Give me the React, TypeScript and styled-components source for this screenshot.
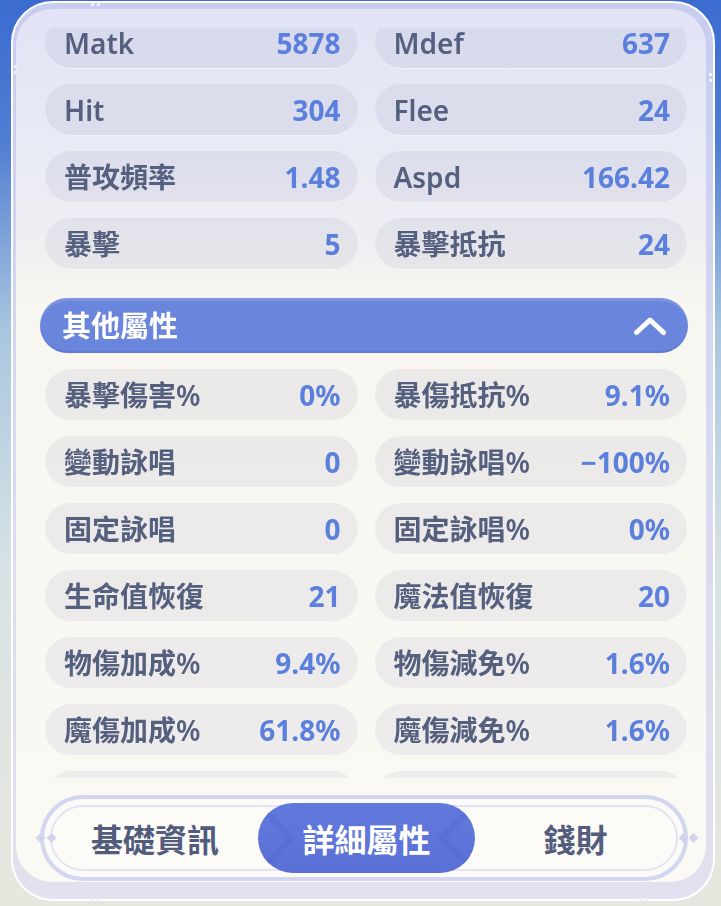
import React from 'react';
import styled, { createGlobalStyle } from 'styled-components';

// colours picked off the screenshot
const COLORS = {
  LABEL: '#55607f',
  VALUE: '#5a7fdc',
  HEADER: '#6a85dc',
  ACTIVE_TAB: '#5a70d6',
  FRAME: '#d3d6f1',
};

const GlobalStyle = createGlobalStyle`
  html, body {
    margin: 0;
    padding: 0;
  }
  body {
    width: 721px;
    height: 906px;
    overflow: hidden;
    background: linear-gradient(180deg, #3b6bcf 0px, #4f7ed2 140px, #a9c6df 330px, #d6e2e4 560px, #e8e7df 100%);
    font-family: "Noto Sans", "Noto Sans CJK TC", sans-serif;
  }
`;

const Panel = styled.div`
  position: relative;
  box-sizing: border-box;
  height: 900px;
  margin: 1px 6px 0 11px;
  border: 2px solid #ffffff;
  border-radius: 42px;
  padding: 6px 7px 17px 3px;
  background: linear-gradient(180deg, #c8cdf0 0%, #d6d9f2 45%, #e3e0ef 100%);
`;

const Content = styled.div`
  box-sizing: border-box;
  height: 100%;
  display: flex;
  flex-direction: column;
  padding: 5px 18px 0 24px;
  border-radius: 36px;
  background: linear-gradient(180deg, #e2e4f6 0px, #e8eaf5 140px, #f0f0f2 240px, #f8f6f0 300px, #fbf9f4 100%);
`;

// scrolled list: the top edge fades out the first row like the game's scroll view
const Scroll = styled.div`
  height: 764px;
  overflow: hidden;
  -webkit-mask-image: linear-gradient(180deg, transparent 13px, #000 14px);
  mask-image: linear-gradient(180deg, transparent 13px, #000 14px);
`;

const List = styled.div`
  padding-top: 3px;
`;

const StatGrid = styled.div`
  display: grid;
  grid-template-columns: 1fr 1fr;
  column-gap: 17px;
  row-gap: 15px;
  padding: 0 1px 0 5px;
`;

const StatPill = styled.div`
  height: 52px;
  display: flex;
  align-items: center;
  justify-content: space-between;
  padding: 0 17px 0 19px;
  border-radius: 26px;
  background: rgba(100, 106, 150, 0.085);
  box-shadow: inset 0 -1px 0 rgba(255, 255, 255, 0.6);
`;

const Label = styled.span`
  font-size: 28px;
  line-height: 1;
  font-weight: 600;
  color: ${COLORS.LABEL};
  white-space: nowrap;
`;

const Value = styled.span`
  font-size: 28px;
  line-height: 1;
  font-weight: 700;
  color: ${COLORS.VALUE};
  white-space: nowrap;
`;

const SectionHeader = styled.div`
  height: 55px;
  margin: 28px 0 16px;
  display: flex;
  align-items: center;
  justify-content: space-between;
  padding: 0 21px 0 22px;
  border-radius: 28px;
  background: ${COLORS.HEADER};
  box-shadow: inset 0 3px 0 rgba(255, 255, 255, 0.12), inset 0 -2px 0 rgba(70, 90, 190, 0.25);
`;

const HeaderTitle = styled.span`
  font-size: 29px;
  line-height: 1;
  font-weight: 700;
  color: #ffffff;
`;

const TabFrame = styled.div`
  position: relative;
  box-sizing: border-box;
  height: 86px;
  margin-top: 17px;
  padding: 6px;
  border: 4px solid ${COLORS.FRAME};
  border-radius: 43px;
  background: #fcfbf7;
`;

const TabTrack = styled.div`
  box-sizing: border-box;
  height: 100%;
  display: grid;
  grid-template-columns: 206px 217px 1fr;
  border: 2px solid #e3e3f3;
  border-radius: 999px;
`;

const Tab = styled.div<{ $active?: boolean }>`
  position: relative;
  display: flex;
  align-items: center;
  justify-content: center;
  margin: ${({ $active }) => ($active ? '-4px 0' : '0')};
  border-radius: 999px;
  overflow: hidden;
  font-family: "Noto Sans CJK TC", sans-serif;
  font-size: 32px;
  font-weight: 700;
  color: ${({ $active }) => ($active ? '#ffffff' : '#525c7c')};
  background: ${({ $active }) => ($active ? `linear-gradient(180deg, #6179dc 0%, ${COLORS.ACTIVE_TAB} 100%)` : 'transparent')};

  /* darker chevron ornaments at both ends of the active tab */
  &::before, &::after {
    content: '';
    display: ${({ $active }) => ($active ? 'block' : 'none')};
    position: absolute;
    top: 50%;
    width: 44px;
    height: 44px;
    border: 6px solid rgba(70, 95, 205, 0.22);
    transform: translateY(-50%) rotate(45deg);
  }
  &::before { left: -30px; }
  &::after { right: -30px; }
`;

const TabText = styled.span`
  position: relative;
  z-index: 1;
`;

const Diamond = styled.i<{ $side: 'left' | 'right'; $offset: number }>`
  position: absolute;
  top: 50%;
  ${({ $side, $offset }) => `${$side}: ${$offset}px;`}
  width: 7px;
  height: 7px;
  background: #d2d4ef;
  transform: translateY(-50%) rotate(45deg);
`;

const Dots = styled.i<{ $x: number; $y: number; $vertical?: boolean }>`
  position: absolute;
  left: ${({ $x }) => $x}px;
  top: ${({ $y }) => $y}px;
  width: ${({ $vertical }) => ($vertical ? '3px' : '10px')};
  height: ${({ $vertical }) => ($vertical ? '10px' : '3px')};
  background: ${({ $vertical }) =>
    $vertical
      ? 'repeating-linear-gradient(180deg, #eef0fb 0 3px, transparent 3px 6px)'
      : 'repeating-linear-gradient(90deg, #eef0fb 0 3px, transparent 3px 6px)'};
`;

type Stat = [string, string];

const BASE_STATS: Stat[][] = [
  [['Matk', '5878'], ['Mdef', '637']],
  [['Hit', '304'], ['Flee', '24']],
  [['普攻頻率', '1.48'], ['Aspd', '166.42']],
  [['暴擊', '5'], ['暴擊抵抗', '24']],
];

// last row only peeks in under the scroll edge, its text is not visible
const OTHER_STATS: Stat[][] = [
  [['暴擊傷害%', '0%'], ['暴傷抵抗%', '9.1%']],
  [['變動詠唱', '0'], ['變動詠唱%', '−100%']],
  [['固定詠唱', '0'], ['固定詠唱%', '0%']],
  [['生命值恢復', '21'], ['魔法值恢復', '20']],
  [['物傷加成%', '9.4%'], ['物傷減免%', '1.6%']],
  [['魔傷加成%', '61.8%'], ['魔傷減免%', '1.6%']],
  [['', ''], ['', '']],
];

const StatRows: React.FC<{ rows: Stat[][] }> = ({ rows }) => (
  <StatGrid>
    {rows.flat().map(([label, value], i) => (
      <StatPill key={i}>
        {label && <Label>{label}</Label>}
        {value && <Value>{value}</Value>}
      </StatPill>
    ))}
  </StatGrid>
);

const ChevronUp = () => (
  <svg width="34" height="20" viewBox="0 0 34 20">
    <path d="M3.5 16.5 L17 4 L30.5 16.5" fill="none" stroke="#ffffff" strokeWidth="5" strokeLinecap="round" strokeLinejoin="round" />
  </svg>
);

const TABS = ['基礎資訊', '詳細屬性', '錢財'];

export default function App() {
  return (
    <>
      <GlobalStyle />
      <Panel>
        <Dots $x={78} $y={0} />
        <Dots $x={1} $y={62} $vertical />
        <Dots $x={696} $y={70} $vertical />
        <Dots $x={78} $y={895} />
        <Dots $x={626} $y={895} />
        <Content>
          <Scroll>
            <List>
              <StatRows rows={BASE_STATS} />
              <SectionHeader>
                <HeaderTitle>其他屬性</HeaderTitle>
                <ChevronUp />
              </SectionHeader>
              <StatRows rows={OTHER_STATS} />
            </List>
          </Scroll>
          <TabFrame>
            <Diamond $side="left" $offset={-7} />
            <Diamond $side="left" $offset={4} />
            <Diamond $side="right" $offset={-3} />
            <Diamond $side="right" $offset={-13} />
            <TabTrack>
              {TABS.map((t, i) => (
                <Tab key={t} $active={i === 1}>
                  <TabText>{t}</TabText>
                </Tab>
              ))}
            </TabTrack>
          </TabFrame>
        </Content>
      </Panel>
    </>
  );
}
